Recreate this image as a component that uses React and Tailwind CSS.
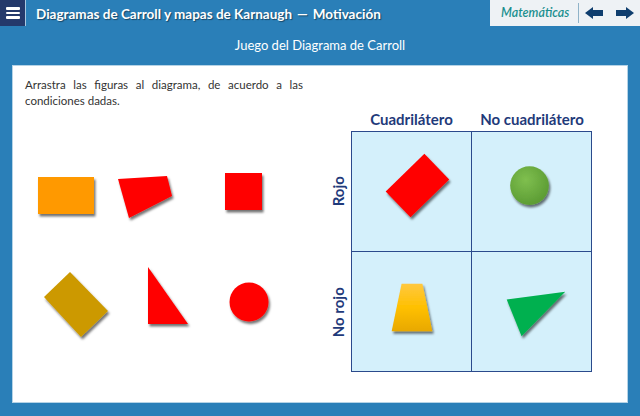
import React from "react";

const font = { fontFamily: "Lato, 'Open Sans', sans-serif" };

const Shadow = ({ id }) => (
  <defs>
    <filter id={id} x="-30%" y="-30%" width="160%" height="160%">
      <feDropShadow dx="1.5" dy="2.5" stdDeviation="1.3" floodColor="#000" floodOpacity="0.55" />
    </filter>
  </defs>
);

const Cell = ({ vb, children }) => {
  const id = `s-${vb.replace(/ /g, "-")}`;
  return (
    <div className="w-[120px] h-[120px] border-r border-b border-[#2b4a8c]">
      <svg width="119" height="119" viewBox={vb}>
        <Shadow id={id} />
        <g filter={`url(#${id})`}>{children}</g>
      </svg>
    </div>
  );
};

export default function App() {
  return (
    <div className="w-[640px] h-[416px] bg-[#2a7fb8] flex flex-col overflow-hidden" style={font}>
      {/* Header */}
      <div className="h-[26px] flex items-stretch">
        <div className="w-[26px] bg-[#24396b] flex flex-col justify-center items-center gap-[2px] border-r border-[#a8c8e0]">
          <span className="block w-[14px] h-[2.5px] bg-white rounded-[1px]" />
          <span className="block w-[14px] h-[2.5px] bg-white rounded-[1px]" />
          <span className="block w-[14px] h-[2.5px] bg-white rounded-[1px]" />
        </div>
        <div className="flex-1 pl-[10px] pt-[2px] flex items-center text-white font-bold text-[13.5px] [text-shadow:1px_1px_1px_rgba(0,0,0,0.45)]">
          Diagramas de Carroll y mapas de Karnaugh <span className="mx-[5px]">—</span> Motivación
        </div>
        <div className="w-[150px] bg-[#eef2f5] flex items-center">
          <span className="pl-[11px] w-[88px] text-[12.5px] italic font-semibold text-[#1a8f8f]">Matemáticas</span>
          <span className="w-px h-[20px] bg-[#8fb3c8]" />
          <svg className="ml-[6px]" width="18" height="12" viewBox="0 0 18 12">
            <path d="M0 6 L8 0 L8 3 L18 3 L18 9 L8 9 L8 12 Z" fill="#0f3e6e" />
          </svg>
          <svg className="ml-[13px]" width="18" height="12" viewBox="0 0 18 12">
            <path d="M18 6 L10 0 L10 3 L0 3 L0 9 L10 9 L10 12 Z" fill="#0f3e6e" />
          </svg>
        </div>
      </div>

      {/* Subtitle */}
      <div className="h-[39px] flex items-center justify-center text-white text-[13px]">
        Juego del Diagrama de Carroll
      </div>

      {/* Panel */}
      <div className="mx-[12px] mb-[13px] flex-1 bg-white border border-[#b5d3e6] flex">
        <div className="w-[300px] flex flex-col justify-between">
          <p className="pt-[11px] pl-[12px] pr-[10px] text-[11.5px] leading-[16px] text-[#333] text-justify">
            Arrastra las figuras al diagrama, de acuerdo a las condiciones dadas.
          </p>
          <svg width="300" height="237" viewBox="12 166 300 237">
            <Shadow id="left" />
            <g filter="url(#left)">
              <rect x="37" y="178" width="56" height="37" fill="#ff9900" />
              <polygon points="117,180 166,177 171,197 128,219" fill="#ff0000" />
              <rect x="224" y="174" width="37" height="37" fill="#ff0000" />
              <polygon points="69,273 107,312 80,338 43,298" fill="#cc9900" />
              <polygon points="147,268 187,325 147,325" fill="#ff0000" />
              <circle cx="248" cy="303" r="19.5" fill="#ff0000" />
            </g>
          </svg>
        </div>

        {/* Carroll diagram */}
        <div className="pt-[42px] pl-[12px]">
          <div className="flex h-[23px] pl-[26px] text-[#1f3a7a] font-bold text-[15px] leading-[23px]">
            <div className="w-[121px] text-center">Cuadrilátero</div>
            <div className="w-[120px] text-center whitespace-nowrap">No cuadrilátero</div>
          </div>
          <div className="flex">
            <div className="w-[26px] flex flex-col text-[#1f3a7a] font-bold text-[15px]">
              <div className="h-[121px] flex items-center justify-center">
                <span className="-rotate-90 whitespace-nowrap">Rojo</span>
              </div>
              <div className="h-[120px] flex items-center justify-center">
                <span className="-rotate-90 whitespace-nowrap">No rojo</span>
              </div>
            </div>
            <div className="border-l border-t border-[#2b4a8c] bg-[#d4f0fb] grid grid-cols-2 w-[241px]">
              <Cell vb="352 132 120 120">
                <polygon points="425,154 450,180 411,218 386,192" fill="#ff0000" />
              </Cell>
              <Cell vb="473 132 120 120">
                <defs>
                  <radialGradient id="gg" cx="0.4" cy="0.35" r="0.7">
                    <stop offset="0" stopColor="#7fbf4f" />
                    <stop offset="1" stopColor="#5a9a32" />
                  </radialGradient>
                </defs>
                <circle cx="531" cy="186" r="19.5" fill="url(#gg)" />
              </Cell>
              <Cell vb="352 252 120 120">
                <defs>
                  <linearGradient id="yg" x1="0" y1="0" x2="0" y2="1">
                    <stop offset="0" stopColor="#ffc840" />
                    <stop offset="0.5" stopColor="#ffc000" />
                    <stop offset="1" stopColor="#e8a800" />
                  </linearGradient>
                </defs>
                <polygon points="402,284 423,284 433,332 392,332" fill="url(#yg)" />
              </Cell>
              <Cell vb="473 252 120 120">
                <polygon points="508,300 567,292 523,337" fill="#00b050" />
              </Cell>
            </div>
          </div>
        </div>
      </div>
    </div>
  );
}
